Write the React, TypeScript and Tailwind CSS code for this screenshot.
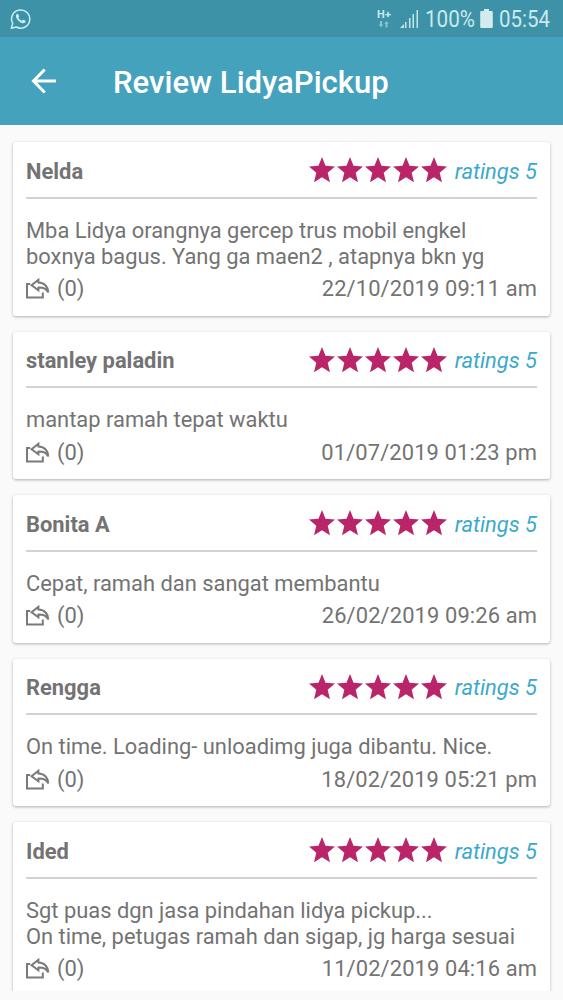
import React from 'react';

interface Review {
  name: string;
  lines: string[];
  replies: number;
  date: string;
  rating: number;
}

const REVIEWS: Review[] = [
  {
    name: 'Nelda',
    lines: ['Mba Lidya orangnya gercep trus mobil engkel', 'boxnya bagus. Yang ga maen2 , atapnya bkn yg'],
    replies: 0,
    date: '22/10/2019 09:11 am',
    rating: 5,
  },
  { name: 'stanley paladin', lines: ['mantap ramah tepat waktu'], replies: 0, date: '01/07/2019 01:23 pm', rating: 5 },
  { name: 'Bonita A', lines: ['Cepat, ramah dan sangat membantu'], replies: 0, date: '26/02/2019 09:26 am', rating: 5 },
  { name: 'Rengga', lines: ['On time. Loading- unloadimg juga dibantu. Nice.'], replies: 0, date: '18/02/2019 05:21 pm', rating: 5 },
  {
    name: 'Ided',
    lines: ['Sgt puas dgn jasa pindahan lidya pickup...', 'On time, petugas ramah dan sigap, jg harga sesuai'],
    replies: 0,
    date: '11/02/2019 04:16 am',
    rating: 5,
  },
];

const WhatsAppIcon = () => (
  <svg width="22" height="22" viewBox="0 0 22 22" fill="none">
    <path d="M1.3 20.3 2.7 15.4A9.1 9.1 0 1 1 6.3 19Z" stroke="#c9edf4" strokeWidth="1.5" strokeLinejoin="round" />
    <path
      d="M7.6 5.8c-.5-.2-1.6.6-1.7 2-.1 3.2 4.1 7.3 7.1 7.4 1.5 0 2.5-.8 2.7-2 0-.5-2.2-1.7-2.7-1.5-.5.2-.9 1.1-1.3 1.1-1.1-.1-3.2-2.3-3.3-3 0-.4.8-.8.8-1.3 0-.6-.9-2.5-1.6-2.7Z"
      fill="#c9edf4"
    />
  </svg>
);

const SignalIcon = () => (
  <svg width="20" height="20" viewBox="0 0 20 20" fill="#c5e4ea">
    <path d="M0 19 4 15v4Z" />
    <rect x="5" y="13" width="1.5" height="6" />
    <rect x="9" y="9" width="1.5" height="10" />
    <rect x="12.5" y="5" width="1.5" height="14" />
    <rect x="16.5" y="1" width="1.5" height="18" />
  </svg>
);

const DataIcon = () => (
  <svg width="12" height="7" viewBox="0 0 12 7" fill="#7fc6d6">
    <path d="M2 0h2v3.5h1.3L3 6.5.7 3.5H2Z" />
    <path d="M7.5 6.5h2V3h1.3L8.5 0 6.2 3h1.3Z" />
  </svg>
);

const BatteryIcon = () => (
  <svg width="13" height="20" viewBox="0 0 13 20" fill="#d3eaee">
    <path d="M4 0h5v2h2.8a1 1 0 0 1 1 1v15a1 1 0 0 1-1 1H1.2a1 1 0 0 1-1-1V3a1 1 0 0 1 1-1H4Z" />
  </svg>
);

const BackIcon = () => (
  <svg width="26" height="26" viewBox="0 0 26 26" fill="none" stroke="#fff" strokeWidth="3">
    <path d="M13.7 1.5 2.5 13l11.2 11.5M2.5 13H25" />
  </svg>
);

const StarIcon = () => (
  <svg width="28" height="28" viewBox="0 0 28 28" fill="#b92568">
    <path d="m14 1 3.5 8.7 9.5.8-7.3 6.2 2.3 9.5-8-5-8 5 2.3-9.5L1 10.5l9.5-.8Z" />
  </svg>
);

const ReplyIcon = () => (
  <svg width="24" height="22" viewBox="0 0 24 22" fill="none" stroke="#7a7a7a" strokeWidth="2">
    <path d="M4.2 6H1v13.6h15.8v-5.2" />
    <path d="M12.4 1.8 5.6 7.2l6.8 5V9.6c4.8-.2 8 1 9.8 4.8.2-5-3.2-9.4-9.8-9.8Z" />
  </svg>
);

const ReviewCard: React.FC<{ review: Review }> = ({ review }) => (
  <div className="shrink-0 rounded-[3px] bg-white px-[13px] pb-[13.5px] shadow-[0_1px_3px_rgba(0,0,0,0.3)]">
    <div className="flex h-[56.5px] items-center justify-between border-b-2 border-[#d2d2d2] pt-[5px]">
      <span className="font-bold">{review.name}</span>
      <div className="flex items-center">
        <div className="-mt-[3px] flex">
          {Array.from({ length: review.rating }, (_, i) => (
            <StarIcon key={i} />
          ))}
        </div>
        <span className="ml-[7px] text-[#3ba9cb] italic">ratings {review.rating}</span>
      </div>
    </div>

    <div className="pt-[19px]">
      {review.lines.map((line) => (
        <p key={line} className="whitespace-nowrap">{line}</p>
      ))}
    </div>

    <div className="mt-[6.5px] flex items-center justify-between">
      <div className="flex items-center gap-[7px]">
        <ReplyIcon />
        <span>({review.replies})</span>
      </div>
      <span className="tracking-[0.12px]">{review.date}</span>
    </div>
  </div>
);

export default function App() {
  return (
    <div className="flex h-[1000px] w-[563px] flex-col overflow-hidden bg-[#fafafa] font-[Roboto,sans-serif] text-[21.9px] leading-[26px] text-[#737373]">
      {/* Status bar */}
      <div className="flex h-[37px] shrink-0 items-center justify-between bg-[#3d92a7] pt-px pr-[12px] pl-[10px] text-[#c9e9ef]">
        <WhatsAppIcon />
        <div className="flex items-center">
          <div className="mr-[9px] flex w-[14px] flex-col items-center gap-[1px]">
            <span className="text-[11px] leading-[10px] font-bold">H+</span>
            <DataIcon />
          </div>
          <SignalIcon />
          <span className="ml-[5px] w-[48px] origin-left scale-x-[0.88] text-[23.5px] whitespace-nowrap">100%</span>
          <span className="ml-[7px]">
            <BatteryIcon />
          </span>
          <span className="ml-[6px] w-[52px] origin-left scale-x-[0.87] text-[23.5px] whitespace-nowrap">05:54</span>
        </div>
      </div>

      {/* App bar */}
      <div className="flex h-[88px] shrink-0 items-center bg-[#45a2bc] pl-[31px] text-white">
        <BackIcon />
        <h1 className="mt-[4px] ml-[56px] text-[31.1px] leading-[36px] font-medium">Review LidyaPickup</h1>
      </div>

      {/* Review list */}
      <div className="flex h-[866px] shrink-0 flex-col gap-4 overflow-hidden px-[13px] pt-[17px]">
        {REVIEWS.map((review) => (
          <ReviewCard key={review.name} review={review} />
        ))}
      </div>
    </div>
  );
}
